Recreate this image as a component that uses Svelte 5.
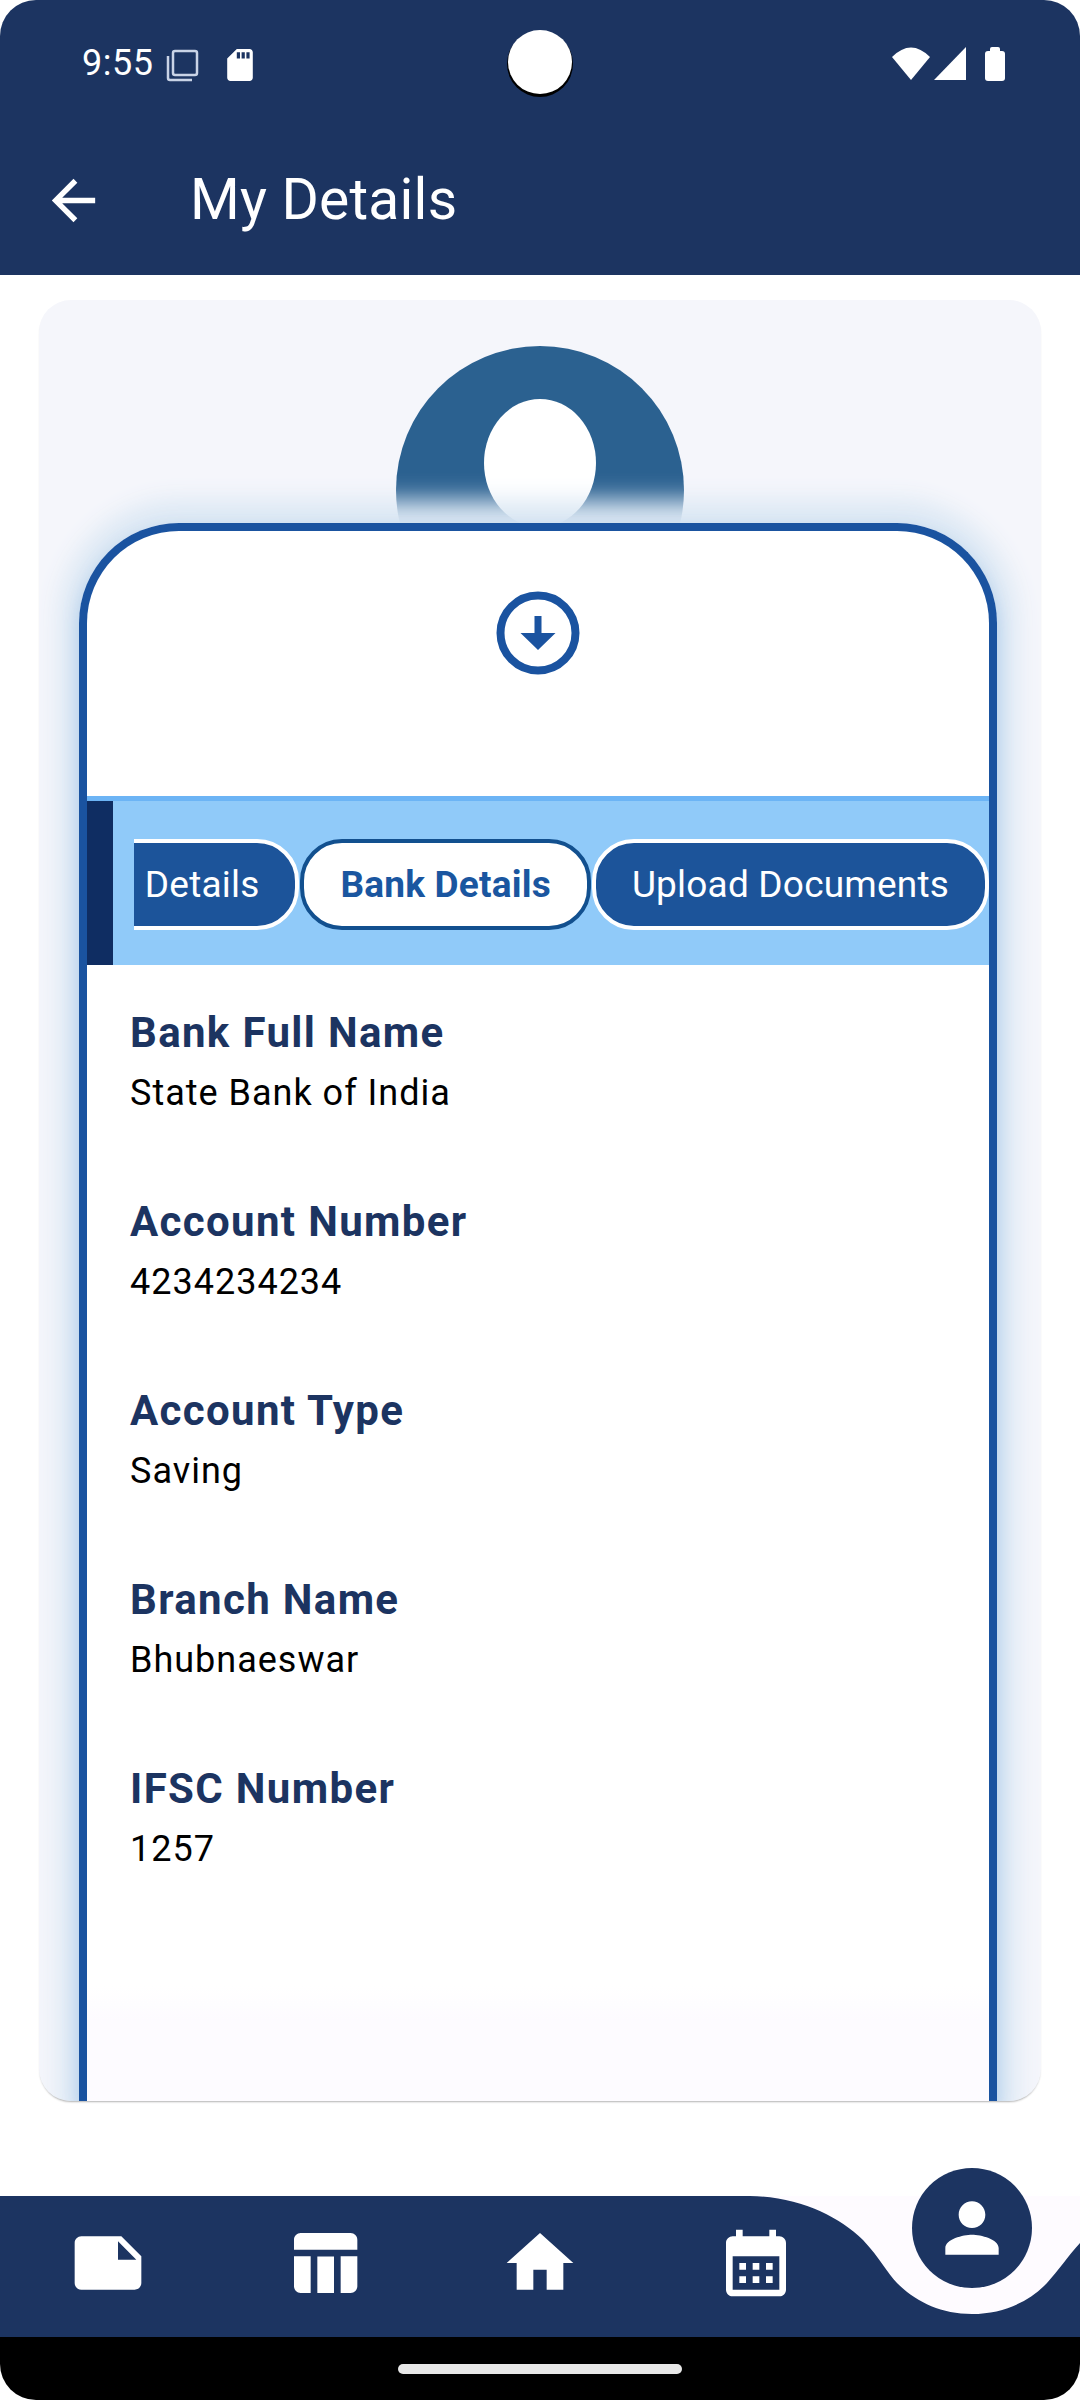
<script>
  const fields = [
    { label: 'Bank Full Name', value: 'State Bank of India' },
    { label: 'Account Number', value: '4234234234' },
    { label: 'Account Type', value: 'Saving' },
    { label: 'Branch Name', value: 'Bhubnaeswar' },
    { label: 'IFSC Number', value: '1257' }
  ];

  const tabs = [
    { name: 'Personal Details', active: false },
    { name: 'Bank Details', active: true },
    { name: 'Upload Documents', active: false }
  ];

  const navIcons = [
    'M22 10l-6-6H4c-1.1 0-2 .9-2 2v12.01c0 1.1.9 1.99 2 1.99l16-.01c1.1 0 2-.89 2-1.99v-8zm-7-4.5l5.5 5.5H15V5.5z',
    'M10 10.02h5V21h-5zM17 21h3c1.1 0 2-.9 2-2v-9h-5v11zm3-18H5c-1.1 0-2 .9-2 2v3h19V5c0-1.1-.9-2-2-2zM3 19c0 1.1.9 2 2 2h3V10H3v9z',
    'M10 20v-6h4v6h5v-8h3L12 3 2 12h3v8z',
    'M19 4h-1V2h-2v2H8V2H6v2H5c-1.1 0-2 .9-2 2v14c0 1.1.9 2 2 2h14c1.1 0 2-.9 2-2V6c0-1.1-.9-2-2-2zm0 16H5V10h14v10zM9 14H7v-2h2v2zm4-2h-2v2h2v-2zm4 0h-2v2h2v-2zm-10 4h2v2H7v-2zm6 2v-2h-2v2h2zm4 0v-2h-2v2h2z'
  ];
</script>

<div class="screen">
  <header class="top">
    <div class="status">
      <span class="time">9:55</span>
      <svg class="copy" viewBox="0 0 33 33" fill="none" stroke="#c9d3e6" stroke-width="2.5">
        <rect x="7" y="2" width="24" height="24" rx="2" />
        <path d="M2 7v22a2 2 0 0 0 2 2h22" />
      </svg>
      <svg class="sd" viewBox="4 2 16 20" fill="#fff">
        <path d="M18 2h-8L4 8v12c0 1.1.9 2 2 2h12c1.1 0 2-.9 2-2V4c0-1.1-.9-2-2-2zm-6 6h-2V4h2v4zm3 0h-2V4h2v4zm3 0h-2V4h2v4z" />
      </svg>
      <div class="status-right">
        <svg class="wifi" viewBox="0 0 38 33" fill="#fff"><path d="M0 10Q19 -9 38 10L19 33Z" /></svg>
        <svg class="signal" viewBox="0 0 32 33" fill="#fff"><path d="M0 33L32 0V33Z" /></svg>
        <div class="battery"></div>
      </div>
    </div>
    <div class="appbar">
      <svg class="back" viewBox="0 0 24 24" fill="#fff">
        <path d="M20 11H7.83l5.59-5.59L12 4l-8 8 8 8 1.41-1.41L7.83 13H20v-2z" />
      </svg>
      <h1>My Details</h1>
    </div>
  </header>

  <div class="camera"></div>

  <main>
    <section class="card">
      <div class="avatar"><div class="avatar-hole"></div></div>

      <div class="sheet">
        <div class="sheet-top">
          <svg class="download" viewBox="0 0 84 84">
            <circle cx="42" cy="42" r="37.500" fill="none" stroke="#1a53a0" stroke-width="8" />
            <path d="M38.500 25h7v17h14L42 59 24.500 42h14z" fill="#1a53a0" />
          </svg>
        </div>

        <div class="band">
          <div class="band-mark"></div>
          <div class="tabs">
            {#each tabs as tab}
              <div class="tab" class:active={tab.active}>{tab.name}</div>
            {/each}
          </div>
        </div>

        <div class="fields">
          {#each fields as f}
            <div class="field">
              <div class="label">{f.label}</div>
              <div class="value">{f.value}</div>
            </div>
          {/each}
        </div>
      </div>
    </section>
  </main>

  <nav class="bottom">
    <svg class="notch" viewBox="0 0 1080 141">
      <path d="M750 0C800 1 838 20 863 44C880 62 888 78 897 87C915 105 940 118 972 118C1004 118 1030 105 1047 87C1058 75 1068 60 1080 47V0Z" fill="#fefbff" />
    </svg>
    {#each navIcons as d}
      <div class="nav-item">
        <svg viewBox="0 0 24 24" fill="#fff"><path {d} /></svg>
      </div>
    {/each}
    <div class="profile">
      <svg viewBox="0 0 24 24" fill="#fff">
        <path d="M12 12c2.21 0 4-1.79 4-4s-1.79-4-4-4-4 1.79-4 4 1.790 4 4 4zm0 2c-2.67 0-8 1.34-8 4v2h16v-2c0-2.660-5.330-4-8-4z" />
      </svg>
    </div>
  </nav>

  <div class="gesture"><div class="pill"></div></div>
</div>

<style>
  :global(body) { margin: 0; background: #fff; }

  .screen {
    position: relative;
    width: 1080px;
    height: 2400px;
    display: flex;
    flex-direction: column;
    overflow: hidden;
    border-radius: 36px;
    background: #fff;
    font-family: Roboto, sans-serif;
  }

  .top { height: 275px; background: #1c3461; color: #fff; flex: none; }

  .status { height: 125px; display: flex; align-items: flex-start; padding: 0 75px 0 82px; box-sizing: border-box; }
  .time { font-size: 36px; line-height: 41px; margin-top: 43px; letter-spacing: 0.5px; width: 84px; }
  .copy { width: 33px; height: 33px; margin-top: 49px; }
  .sd { width: 26px; height: 32px; margin: 49px 0 0 28px; }
  .status-right { margin-left: auto; display: flex; align-items: flex-start; padding-top: 47px; }
  .wifi { width: 38px; height: 33px; }
  .signal { width: 32px; height: 33px; margin-left: 4px; }
  .battery {
    position: relative;
    width: 20px;
    height: 30px;
    margin: 4px 0 0 19px;
    background: #fff;
    border-radius: 3px;
  }
  .battery::before {
    content: '';
    position: absolute;
    left: 5px;
    top: -4px;
    width: 10px;
    height: 5px;
    background: #fff;
    border-radius: 2px 2px 0 0;
  }

  .appbar { display: flex; align-items: center; height: 150px; padding: 0 0 0 41px; }
  .back { width: 65px; height: 65px; flex: none; }
  h1 { margin: 0 0 0 84px; font-size: 57px; line-height: 64px; font-weight: 400; letter-spacing: 0.2px; }

  .camera {
    position: absolute;
    left: 508px;
    top: 30px;
    width: 64px;
    height: 64px;
    border-radius: 50%;
    background: #fff;
    box-shadow: 0 2px 0 1px #000;
  }

  main { flex: 1; display: flex; flex-direction: column; padding: 25px 39px 95px 39px; min-height: 0; }

  .card {
    flex: 1;
    display: flex;
    flex-direction: column;
    min-height: 0;
    padding: 46px 44px 0 40px;
    border-radius: 32px;
    background: #f5f6fb;
    box-shadow: 0 2px 2px -1px rgba(0, 0, 0, 0.3);
    overflow: hidden;
  }

  .avatar {
    flex: none;
    align-self: center;
    width: 288px;
    height: 288px;
    margin-left: 4px;
    box-sizing: border-box;
    padding-top: 53px;
    display: flex;
    justify-content: center;
    border-radius: 50%;
    background: #2b6190;
  }
  .avatar-hole { width: 112px; height: 128px; border-radius: 50%; background: #fff; }

  .sheet {
    position: relative;
    flex: 1;
    margin-top: -111px;
    border: 8px solid #1a53a0;
    border-bottom: 0;
    border-radius: 100px 100px 0 0;
    background: linear-gradient(#fff 1455px, #fdfbff 1490px);
    box-shadow: 0 8px 16px 2px #b5d0ec, 0 -3px 24px 20px #dce8f4;
  }

  .sheet-top { height: 265px; display: flex; justify-content: center; padding-top: 60px; box-sizing: border-box; }
  .download { width: 84px; height: 84px; }

  .band {
    height: 164px;
    display: flex;
    border-top: 5px solid #6cb4f5;
    background: #90caf9;
  }
  .band-mark { width: 26px; flex: none; background: #0f2d62; }

  .tabs {
    flex: 1;
    min-width: 0;
    margin-left: 21px;
    display: flex;
    justify-content: flex-end;
    align-items: center;
    gap: 1px;
    overflow: hidden;
    padding-top: 2px;
  }

  .tab {
    flex: none;
    height: 91px;
    box-sizing: border-box;
    padding: 0 36px;
    display: flex;
    align-items: center;
    border: 4px solid #fff;
    border-radius: 42px;
    background: #1c549a;
    color: #fff;
    font-size: 37px;
    letter-spacing: 0.2px;
  }
  .tab.active { border-color: #12508f; background: #fff; color: #1a56a0; font-weight: 700; }

  .fields { padding: 43px 0 0 43px; }
  .field { height: 189px; }
  .label { font-size: 42px; line-height: 50px; font-weight: 700; color: #1c3461; letter-spacing: 1.35px; }
  .value { font-size: 36px; line-height: 42px; margin-top: 14px; color: #000; letter-spacing: 1px; }

  .bottom {
    position: relative;
    flex: none;
    height: 141px;
    display: grid;
    grid-template-columns: repeat(5, 216px);
    background: #1c3461;
  }
  .notch { position: absolute; left: 0; top: 0; width: 1080px; height: 141px; }
  .nav-item { position: relative; display: flex; justify-content: center; padding-top: 27px; }
  .nav-item svg { width: 80px; height: 80px; }

  .profile {
    position: absolute;
    left: 912px;
    top: -28px;
    width: 120px;
    height: 120px;
    display: flex;
    justify-content: center;
    padding-top: 20px;
    box-sizing: border-box;
    border-radius: 50%;
    background: #1c3461;
  }
  .profile svg { width: 80px; height: 80px; flex: none; }

  .gesture { flex: none; height: 63px; background: #000; display: flex; justify-content: center; padding-top: 27px; box-sizing: border-box; }
  .pill { width: 284px; height: 10px; border-radius: 5px; background: #e8e8e8; }
</style>
